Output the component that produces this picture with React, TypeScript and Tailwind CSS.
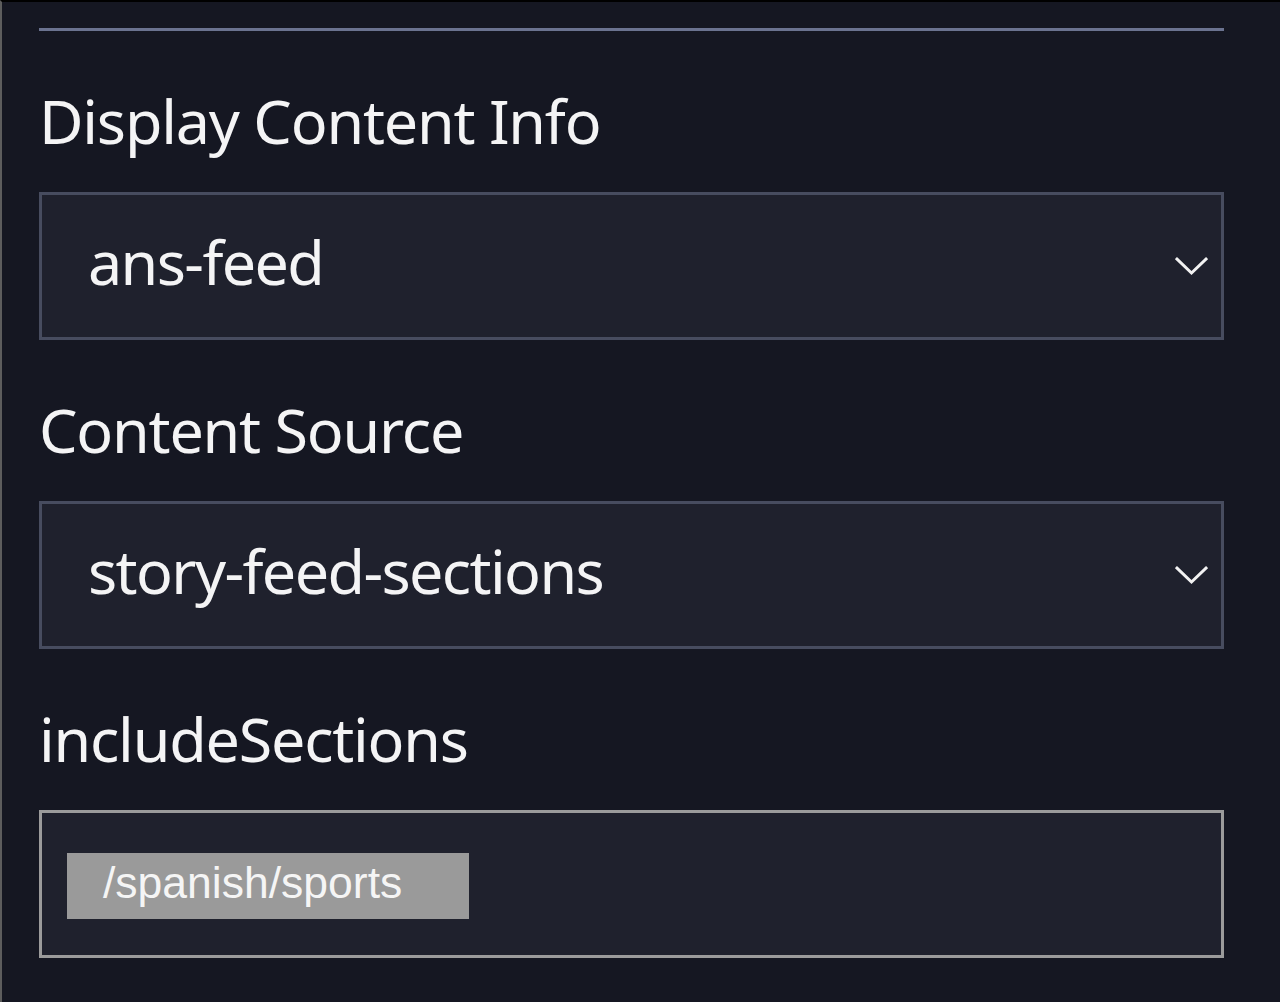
import React from 'react'

const labelFont = { fontFamily: '"Noto Sans", "Open Sans", sans-serif' }

const Chevron: React.FC = () => (
  <svg width="33" height="20" viewBox="0 0 33 20" fill="none" className="shrink-0">
    <path d="M2 3 L16.5 17 L31 3" stroke="#f2f2f2" strokeWidth="3" strokeLinecap="square" />
  </svg>
)

const SelectField: React.FC<{ label: string; value: string }> = ({ label, value }) => (
  <div className="mt-[59px]">
    <div className="text-[61px] leading-[62px] tracking-[-1.2px] text-[#f4f4f5]" style={labelFont}>
      {label}
    </div>
    <div className="mt-[40px] h-[148px] border-[3px] border-[#474c5f] bg-[#1f212d] flex items-center pl-[46px] pr-[13px]">
      <span className="flex-1 pb-[10px] text-[61px] leading-none tracking-[-1.6px] text-[#f4f4f5]" style={labelFont}>
        {value}
      </span>
      <Chevron />
    </div>
  </div>
)

export default function App() {
  return (
    <div className="min-h-[1002px] bg-[#151722] border-t-2 border-t-black border-l-2 border-l-[#5d5d5d] pl-[37px] pr-[56px] pt-[26px]">
      <div className="h-[3px] bg-[#6b7390]" />

      <SelectField label="Display Content Info" value="ans-feed" />
      <SelectField label="Content Source" value="story-feed-sections" />

      {/* includeSections tag input */}
      <div className="mt-[59px]">
        <div className="text-[61px] leading-[62px] tracking-[-1.2px] text-[#f4f4f5]" style={labelFont}>
          includeSections
        </div>
        <div className="mt-[40px] h-[148px] border-[3px] border-[#9b9b9b] bg-[#1f212d] flex items-center pl-[25px] pt-[4px]">
          <div className="h-[66px] w-[402px] bg-[#9a9a9a] flex items-center pl-[36px]">
            <span
              className="pb-[5px] text-[44.5px] leading-none text-[#f5f5f5]"
              style={{ fontFamily: '"Liberation Sans", Arial, sans-serif' }}
            >
              /spanish/sports
            </span>
          </div>
        </div>
      </div>
    </div>
  )
}
